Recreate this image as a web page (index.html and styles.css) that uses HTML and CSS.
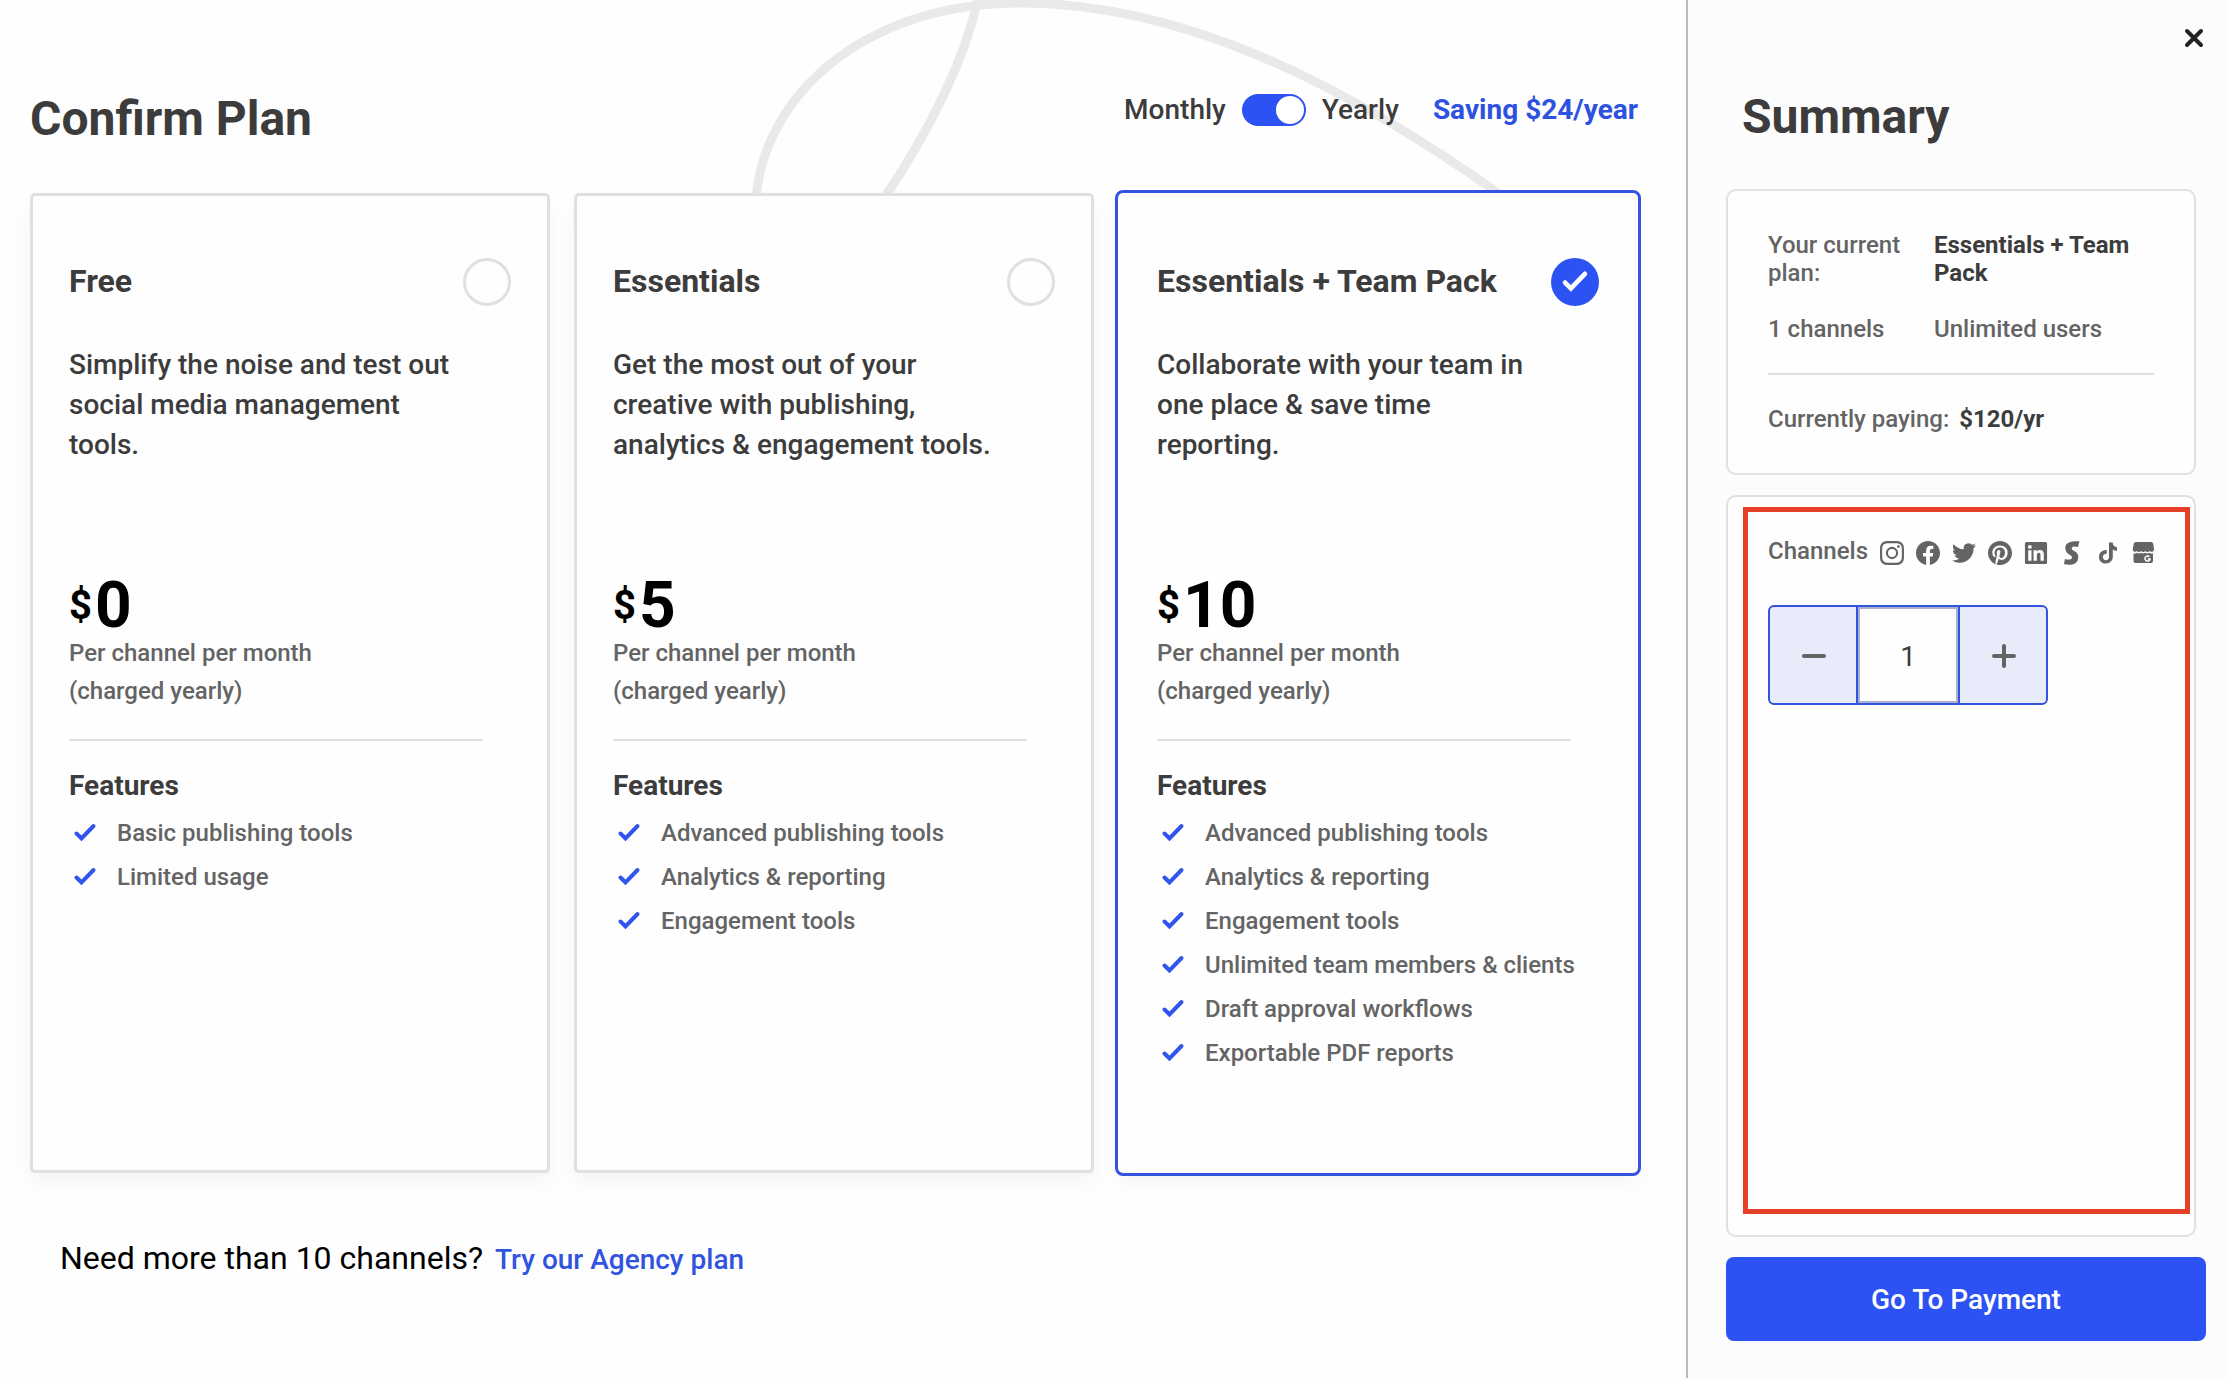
FILE: index.html
```html
<!DOCTYPE html>
<html lang="en">
<head>
<meta charset="utf-8">
<title>Confirm Plan</title>
<link rel="stylesheet" href="styles.css">
</head>
<body>
<svg class="defs" width="0" height="0" aria-hidden="true">
  <symbol id="tick" viewBox="0 0 24 20"><path d="M3.500 10.500 8.500 15.500 20.500 3" fill="none" stroke="currentColor" stroke-width="4" stroke-linecap="round"/></symbol>
</svg>
<div class="page">
  <main class="plans">
    <svg class="swirl" width="780" height="200" viewBox="740 0 780 200" fill="none" stroke="#e9e9e9" stroke-width="9" aria-hidden="true">
      <path d="M756 200C762 100 860 3 1020 3C1180 3 1340 80 1508 200"/>
      <path d="M883 200C930 130 965 60 979 -5"/>
    </svg>
    <header class="plans-head">
      <h1 class="title">Confirm Plan</h1>
      <div class="billing">
        <label for="yearly">Monthly</label>
        <input class="switch" type="checkbox" role="switch" id="yearly" checked>
        <label for="yearly">Yearly</label>
        <strong class="saving">Saving $24/year</strong>
      </div>
    </header>

    <div class="cards">
      <article class="card">
        <div class="card-head">
          <h2 class="card-title"><label for="free">Free</label></h2>
          <span class="pick"><input type="radio" name="plan" id="free"><svg class="pick-tick"><use href="#tick"/></svg></span>
        </div>
        <p class="desc">Simplify the noise and test out social media management tools.</p>
        <p class="price"><span class="currency">$</span>0</p>
        <p class="terms">Per channel per month<br>(charged yearly)</p>
        <hr class="rule">
        <h3 class="features-title">Features</h3>
        <ul class="features">
          <li><svg class="tick"><use href="#tick"/></svg>Basic publishing tools</li>
          <li><svg class="tick"><use href="#tick"/></svg>Limited usage</li>
        </ul>
      </article>

      <article class="card">
        <div class="card-head">
          <h2 class="card-title"><label for="essentials">Essentials</label></h2>
          <span class="pick"><input type="radio" name="plan" id="essentials"><svg class="pick-tick"><use href="#tick"/></svg></span>
        </div>
        <p class="desc">Get the most out of your creative with publishing, analytics &amp; engagement tools.</p>
        <p class="price"><span class="currency">$</span>5</p>
        <p class="terms">Per channel per month<br>(charged yearly)</p>
        <hr class="rule">
        <h3 class="features-title">Features</h3>
        <ul class="features">
          <li><svg class="tick"><use href="#tick"/></svg>Advanced publishing tools</li>
          <li><svg class="tick"><use href="#tick"/></svg>Analytics &amp; reporting</li>
          <li><svg class="tick"><use href="#tick"/></svg>Engagement tools</li>
        </ul>
      </article>

      <article class="card card-selected">
        <div class="card-head">
          <h2 class="card-title"><label for="team">Essentials + Team Pack</label></h2>
          <span class="pick"><input type="radio" name="plan" id="team" checked><svg class="pick-tick"><use href="#tick"/></svg></span>
        </div>
        <p class="desc">Collaborate with your team in one place &amp; save time reporting.</p>
        <p class="price"><span class="currency">$</span>10</p>
        <p class="terms">Per channel per month<br>(charged yearly)</p>
        <hr class="rule">
        <h3 class="features-title">Features</h3>
        <ul class="features">
          <li><svg class="tick"><use href="#tick"/></svg>Advanced publishing tools</li>
          <li><svg class="tick"><use href="#tick"/></svg>Analytics &amp; reporting</li>
          <li><svg class="tick"><use href="#tick"/></svg>Engagement tools</li>
          <li><svg class="tick"><use href="#tick"/></svg>Unlimited team members &amp; clients</li>
          <li><svg class="tick"><use href="#tick"/></svg>Draft approval workflows</li>
          <li><svg class="tick"><use href="#tick"/></svg>Exportable PDF reports</li>
        </ul>
      </article>
    </div>

    <p class="more">Need more than 10 channels? <a href="#agency">Try our Agency plan</a></p>
  </main>

  <aside class="summary">
    <button class="close" type="button" aria-label="Close">
      <svg width="20" height="20" viewBox="0 0 20 20" fill="none" stroke="#222" stroke-width="4" stroke-linecap="round"><path d="M3 3 17 17M17 3 3 17"/></svg>
    </button>
    <h2 class="title summary-title">Summary</h2>

    <section class="box">
      <dl class="current">
        <dt>Your current plan:</dt>
        <dd><strong>Essentials + Team Pack</strong></dd>
        <dt>1 channels</dt>
        <dd>Unlimited users</dd>
      </dl>
      <hr class="box-rule">
      <p class="paying">Currently paying: <strong>$120/yr</strong></p>
    </section>

    <section class="box box-channels">
      <div class="channels">
        <label for="count">Channels</label>
        <div class="networks">
          <svg viewBox="0 0 24 24"><path d="M12 2.163c3.204 0 3.584.012 4.850.070 3.252.148 4.771 1.691 4.919 4.919.058 1.265.069 1.645.069 4.849 0 3.205-.012 3.584-.069 4.849-.149 3.225-1.664 4.771-4.919 4.919-1.266.058-1.644.070-4.850.070-3.204 0-3.584-.012-4.849-.070-3.260-.149-4.771-1.699-4.919-4.920-.058-1.265-.070-1.644-.070-4.849 0-3.204.013-3.583.070-4.849.149-3.227 1.664-4.771 4.919-4.919 1.266-.057 1.645-.069 4.849-.069zM12 0C8.741 0 8.333.014 7.053.072 2.695.272.273 2.690.073 7.052.014 8.333 0 8.741 0 12c0 3.259.014 3.668.072 4.948.2 4.358 2.618 6.780 6.980 6.980C8.333 23.986 8.741 24 12 24c3.259 0 3.668-.014 4.948-.072 4.354-.2 6.782-2.618 6.979-6.980.059-1.280.073-1.689.073-4.948 0-3.259-.014-3.667-.072-4.947-.196-4.354-2.617-6.780-6.979-6.980C15.668.014 15.259 0 12 0zm0 5.838a6.162 6.162 0 1 0 0 12.324 6.162 6.162 0 0 0 0-12.324zM12 16a4 4 0 1 1 0-8 4 4 0 0 1 0 8zm6.406-11.845a1.440 1.440 0 1 0 0 2.881 1.440 1.440 0 0 0 0-2.881z"/></svg>
          <svg viewBox="0 0 24 24"><path d="M24 12.073C24 5.446 18.627.073 12 .073S0 5.446 0 12.073c0 5.990 4.388 10.954 10.125 11.854v-8.385H7.078v-3.470h3.047V9.430c0-3.007 1.792-4.669 4.533-4.669 1.312 0 2.686.235 2.686.235v2.953H15.830c-1.491 0-1.956.925-1.956 1.874v2.250h3.328l-.532 3.470h-2.796v8.385C19.612 23.027 24 18.062 24 12.073z"/></svg>
          <svg viewBox="0 0 24 24"><path d="M23.953 4.570a10 10 0 0 1-2.825.775 4.958 4.958 0 0 0 2.163-2.723c-.951.555-2.005.959-3.127 1.184a4.920 4.920 0 0 0-8.384 4.482C7.690 8.095 4.067 6.130 1.640 3.162a4.822 4.822 0 0 0-.666 2.475c0 1.710.870 3.213 2.188 4.096a4.904 4.904 0 0 1-2.228-.616v.060a4.923 4.923 0 0 0 3.946 4.827 4.996 4.996 0 0 1-2.212.085 4.936 4.936 0 0 0 4.604 3.417 9.867 9.867 0 0 1-6.102 2.105c-.390 0-.779-.023-1.170-.067a13.995 13.995 0 0 0 7.557 2.209c9.053 0 13.998-7.496 13.998-13.985 0-.210 0-.420-.015-.630A9.935 9.935 0 0 0 24 4.590z"/></svg>
          <svg viewBox="0 0 24 24"><path d="M12 0C5.373 0 0 5.372 0 12c0 5.084 3.163 9.426 7.627 11.174-.105-.949-.200-2.405.042-3.441.218-.937 1.407-5.965 1.407-5.965s-.359-.719-.359-1.782c0-1.668.967-2.914 2.171-2.914 1.023 0 1.518.769 1.518 1.690 0 1.029-.655 2.568-.994 3.995-.283 1.194.599 2.169 1.777 2.169 2.133 0 3.772-2.249 3.772-5.495 0-2.873-2.064-4.882-5.012-4.882-3.414 0-5.418 2.561-5.418 5.207 0 1.031.397 2.138.893 2.738a.36.36 0 0 1 .083.345l-.333 1.360c-.053.220-.174.267-.402.161-1.499-.698-2.436-2.889-2.436-4.649 0-3.785 2.750-7.262 7.929-7.262 4.163 0 7.398 2.967 7.398 6.931 0 4.136-2.607 7.464-6.227 7.464-1.216 0-2.359-.631-2.750-1.378l-.748 2.853c-.271 1.043-1.002 2.350-1.492 3.146C9.570 23.812 10.763 24 12 24c6.627 0 12-5.373 12-12S18.627 0 12 0z"/></svg>
          <svg viewBox="-1 -1 26 26"><path d="M20.447 20.452h-3.554v-5.569c0-1.328-.027-3.037-1.852-3.037-1.853 0-2.136 1.445-2.136 2.939v5.667H9.351V9h3.414v1.561h.046c.477-.900 1.637-1.850 3.370-1.850 3.601 0 4.267 2.370 4.267 5.455v6.286zM5.337 7.433a2.062 2.062 0 1 1 0-4.125 2.062 2.062 0 0 1 0 4.125zm1.782 13.019H3.555V9h3.564v11.452zM22.225 0H1.771C.792 0 0 .774 0 1.729v20.542C0 23.227.792 24 1.771 24h20.451C23.200 24 24 23.227 24 22.271V1.729C24 .774 23.200 0 22.222 0z"/></svg>
          <svg viewBox="0 0 24 24"><path d="M19.500.300C13 .100 5.500.500 5.300 6.700 5.200 10.600 7 12.200 10.300 14.200 12 15.300 12.300 15.800 11.900 17 11.200 19 8 18.700 4.900 18L4 23.100C9.500 24.600 17.300 24.300 18.200 17.200 18.700 13.400 17 11.500 13.400 9.500 11.700 8.500 11.500 7.900 11.900 6.900 12.700 5.200 15 5.400 17.900 6.100z"/></svg>
          <svg viewBox="-3 0 24 24"><path d="M13.700 1.500H10V16c0 1.900-1.400 3.200-3.100 3.200S3.800 17.800 3.800 16c0-2 1.600-3.400 3.900-3.200V9.100C3.400 8.800 0 11.800 0 15.900 0 20 3.100 22.500 6.900 22.500c4 0 6.900-2.800 6.900-6.700V8.400c1.200.8 2.600 1.300 4.200 1.300V6.200c-2.500-.2-4.300-2.200-4.300-4.700z"/></svg>
          <svg viewBox="0 0 24 24"><path fill-rule="evenodd" d="M4 1h15q2 0 2.300 2L22 8.500C22 11 19 11.500 17.500 10c-1.300 1.500-3 1.500-4.200 0-1.200 1.500-3 1.500-4.200 0-1.200 1.500-3 1.500-4.200 0C3.800 11.500.800 11 .700 8.500L1.700 3Q2 1 4 1zM1.500 12.400c1.300.400 2.500.100 3.500-.700 1.300.900 2.900.900 4.100 0 1.300.900 2.900.900 4.200 0 1.300.900 2.900.900 4.200 0 1 .800 2.300 1.100 3.500.700V20q0 2-2 2h-15.500Q1.500 22 1.500 20z"/><path d="M17.400 15.700A2.600 2.600 0 1 0 18.100 17.900H15.800" fill="none" stroke="#fff" stroke-width="1.500"/></svg>
        </div>
      </div>
      <div class="stepper">
        <button type="button" aria-label="Remove a channel"><svg width="24" height="24" viewBox="0 0 24 24" fill="none" stroke="#646464" stroke-width="4" stroke-linecap="round"><path d="M2 12H22"/></svg></button>
        <input type="text" inputmode="numeric" id="count" value="1">
        <button type="button" aria-label="Add a channel"><svg width="24" height="24" viewBox="0 0 24 24" fill="none" stroke="#646464" stroke-width="4" stroke-linecap="round"><path d="M2 12H22M12 2V22"/></svg></button>
      </div>
      <div class="highlight"></div>
    </section>

    <button class="pay" type="button">Go To Payment</button>
  </aside>
</div>
</body>
</html>
```
FILE: styles.css
```css
*, *::before, *::after { box-sizing: border-box; }

body {
  margin: 0;
  background: #fefefe;
  color: #3c3c3c;
  font: 500 24px/28px Roboto, "Liberation Sans", sans-serif;
}

h1, h2, h3, p, dl, dd, ul { margin: 0; padding: 0; }
strong { font-weight: 700; }
button, input { margin: 0; font: inherit; }
button { padding: 0; border: 0; background: none; cursor: pointer; }

.defs { position: absolute; }

.page {
  display: grid;
  grid-template-columns: minmax(0, 1fr) 542px;
  min-height: 100vh;
}

.plans {
  position: relative;
  padding: 91px 48px 40px 30px;
}

/* decorative line behind the header */
.swirl {
  position: absolute;
  top: 0;
  left: 740px;
}

.plans-head {
  position: relative;
  display: flex;
  justify-content: space-between;
  align-items: flex-start;
  margin-bottom: 46px;
}

.title {
  font-size: 48px;
  line-height: 56px;
  font-weight: 700;
}

.billing {
  display: flex;
  align-items: center;
  gap: 16px;
  font-size: 28px;
  line-height: 38px;
}

.saving {
  margin-left: 18px;
  color: #2e52e0;
}

.switch {
  appearance: none;
  display: flex;
  width: 64px;
  height: 32px;
  padding: 2px;
  border-radius: 16px;
  background: #bdbdbd;
}
.switch::before {
  content: "";
  width: 28px;
  height: 28px;
  border-radius: 50%;
  background: #fff;
}
.switch:checked { background: #2c52f4; justify-content: flex-end; }

.cards {
  position: relative;
  display: grid;
  grid-template-columns: repeat(3, minmax(0, 1fr));
  gap: 24px;
}

.card {
  min-height: 980px;
  padding: 62px 36px;
  border: 3px solid #e0e0e0;
  border-radius: 5px;
  background: #fefefe;
  box-shadow: 0 10px 20px rgba(0, 0, 0, .04);
}
.card-selected {
  border-color: transparent;
  outline: 3px solid #3355dd;
}

.card-head {
  display: flex;
  justify-content: space-between;
  align-items: flex-start;
  margin-bottom: 39px;
}

.card-title { font-size: 32px; line-height: 46px; }

.pick { display: grid; }
.pick > * { grid-area: 1 / 1; place-self: center; }
.pick input {
  appearance: none;
  width: 48px;
  height: 48px;
  border: 3px solid #e0e0e0;
  border-radius: 50%;
}
.pick input:checked { border: 0; background: #2c52f4; }
.pick-tick {
  width: 28px;
  height: 24px;
  color: #fff;
  visibility: hidden;
  pointer-events: none;
}
.pick input:checked + .pick-tick { visibility: visible; }

.desc {
  max-width: 390px;
  min-height: 120px;
  margin-bottom: 109px;
  font-size: 28px;
  line-height: 40px;
}

.price {
  display: flex;
  align-items: center;
  gap: 3px;
  padding-top: 2px;
  color: #000;
  font-size: 64px;
  line-height: 60px;
  font-weight: 700;
}
.currency { font-size: 40px; }

.terms { margin-top: -2px; color: #646464; line-height: 38px; }

.rule, .box-rule {
  height: 2px;
  margin: 29px 28px 25px 0;
  border: 0;
  background: #e0e0e0;
}

.features-title { font-size: 28px; line-height: 40px; }

.features {
  margin-top: 5px;
  list-style: none;
  color: #646464;
  line-height: 44px;
}
.features li { display: flex; align-items: center; gap: 20px; }
.tick { width: 24px; height: 20px; margin-left: 4px; color: #3054ec; }

.more {
  margin: 65px 0 0 30px;
  color: #000;
  font-size: 32px;
  line-height: 40px;
  font-weight: 400;
}
.more a {
  margin-left: 4px;
  color: #3054e0;
  font-size: 28px;
  font-weight: 500;
  text-decoration: none;
}

.summary {
  display: flex;
  flex-direction: column;
  padding: 28px 22px 37px 38px;
  border-left: 2px solid #bbb;
  background: #fcfcfc;
}

.close {
  display: flex;
  align-self: flex-end;
  margin: 0 2px 41px 0;
}

.summary-title { margin: 0 0 44px 16px; }

.box {
  margin: 0 10px 20px 0;
  padding: 40px;
  border: 2px solid #e0e0e0;
  border-radius: 10px;
  background: #fefefe;
  color: #646464;
}
.box strong { color: #3c3c3c; }

.current {
  display: grid;
  grid-template-columns: 150px 1fr;
  gap: 28px 16px;
}

.box-rule { margin: 30px 0; }

.paying { display: flex; gap: 10px; }

.box-channels { position: relative; flex: 1; }

/* callout drawn over the channel box */
.highlight {
  position: absolute;
  inset: 10px 4px 21px 15px;
  border: 5px solid #e64128;
  pointer-events: none;
}

.channels { display: flex; align-items: flex-end; gap: 12px; }
.networks { display: flex; gap: 12px; }
.networks svg { width: 24px; height: 24px; fill: #646464; }

.stepper {
  display: grid;
  grid-template-columns: 1fr 100px 1fr;
  gap: 2px;
  width: 280px;
  height: 100px;
  margin-top: 40px;
  border: 2px solid #3355dd;
  border-radius: 6px;
  background: #3355dd;
  overflow: hidden;
}
.stepper button {
  display: grid;
  place-items: center;
  padding: 2px 0 0 2px;
  background: #e8ebfa;
}
.stepper input {
  min-width: 0;
  padding: 2px 0 0;
  border: 2px solid #a9afd0;
  border-radius: 0;
  background: #fefefe;
  color: #3c3c3c;
  font-size: 28px;
  font-weight: 400;
  text-align: center;
}

.pay {
  height: 84px;
  padding-top: 2px;
  border-radius: 8px;
  background: #2c52f4;
  color: #fff;
  font-size: 28px;
}
```
